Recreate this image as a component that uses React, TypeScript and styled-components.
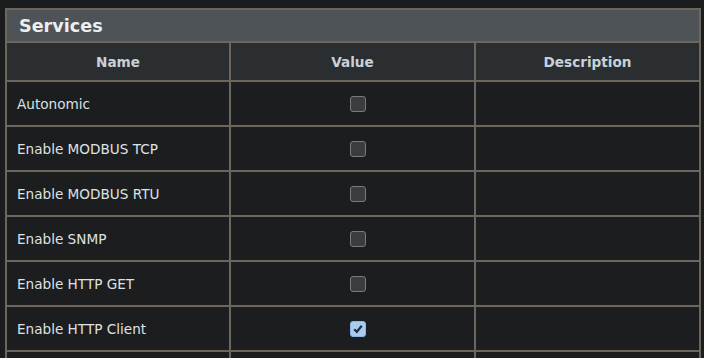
import React from 'react';
import styled, { createGlobalStyle } from 'styled-components';

const GlobalStyle = createGlobalStyle`
  html, body {
    margin: 0;
    padding: 0;
    background: #1b1c1e;
  }
  body {
    font-family: "DejaVu Sans", Verdana, sans-serif;
  }
`;

interface Service {
  name: string;
  enabled: boolean;
  description?: string;
}

const services: Service[] = [
  { name: 'Autonomic', enabled: false },
  { name: 'Enable MODBUS TCP', enabled: false },
  { name: 'Enable MODBUS RTU', enabled: false },
  { name: 'Enable SNMP', enabled: false },
  { name: 'Enable HTTP GET', enabled: false },
  { name: 'Enable HTTP Client', enabled: true },
];

const Page = styled.div`
  padding: 8px 0 0 5px;
  width: 699px;
  height: 350px;
  overflow: hidden;
`;

const Table = styled.table`
  width: 694px;
  border-collapse: collapse;
  table-layout: fixed;
  font-size: 13.6px;
`;

const TitleCell = styled.th`
  height: 31px;
  padding: 0 0 0 12px;
  border: 2px solid #6c665d;
  background: #4e5357;
  color: #eceeef;
  font-size: 17.6px;
  font-weight: bold;
  text-align: left;
  vertical-align: middle;
`;

const HeadCell = styled.th`
  height: 37px;
  padding: 0;
  border: 2px solid #6c665d;
  background: #2b2e31;
  color: #c9d1d8;
  font-weight: bold;
  text-align: center;
`;

const Cell = styled.td<{ $center?: boolean }>`
  height: 43px;
  padding: 0 0 0 10px;
  border: 2px solid #6c665d;
  background: #1c1d1f;
  color: #dfe2e4;
  text-align: ${(p) => (p.$center ? 'center' : 'left')};
  vertical-align: middle;
`;

const Check = styled.span<{ $checked: boolean }>`
  display: inline-flex;
  align-items: center;
  justify-content: center;
  box-sizing: border-box;
  width: 16px;
  height: 16px;
  border-radius: 3px;
  border: 1px solid ${(p) => (p.$checked ? '#8fb6e0' : '#7b7b7b')};
  background: ${(p) => (p.$checked ? '#a7cdf7' : '#3b3c3e')};
  vertical-align: middle;
`;

const CheckBox = ({ checked }: { checked: boolean }) => (
  <Check $checked={checked} role="checkbox" aria-checked={checked}>
    {checked && (
      <svg width="12" height="12" viewBox="0 0 12 12">
        <path d="M2.2 6.2 L4.8 8.8 L9.8 2.8" fill="none" stroke="#2c2e31" strokeWidth="2.2" />
      </svg>
    )}
  </Check>
);

const App = () => (
  <Page>
    <GlobalStyle />
    <Table>
      <colgroup>
        <col style={{ width: 224 }} />
        <col style={{ width: 245 }} />
        <col style={{ width: 225 }} />
      </colgroup>
      <thead>
        <tr>
          <TitleCell colSpan={3}>Services</TitleCell>
        </tr>
        <tr>
          <HeadCell>Name</HeadCell>
          <HeadCell>Value</HeadCell>
          <HeadCell>Description</HeadCell>
        </tr>
      </thead>
      <tbody>
        {services.map((s) => (
          <tr key={s.name}>
            <Cell>{s.name}</Cell>
            <Cell $center>
              <CheckBox checked={s.enabled} />
            </Cell>
            <Cell>{s.description ?? ''}</Cell>
          </tr>
        ))}
        <tr>
          <Cell />
          <Cell />
          <Cell />
        </tr>
      </tbody>
    </Table>
  </Page>
);

export default App;
